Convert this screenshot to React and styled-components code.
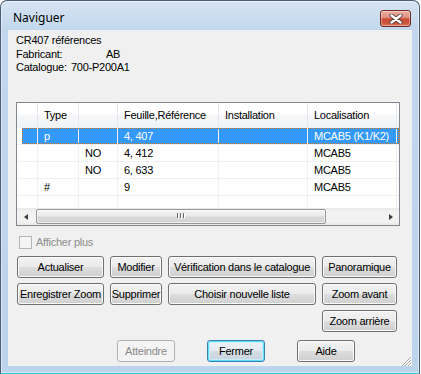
import React from 'react';
import styled, { createGlobalStyle, css } from 'styled-components';

const GlobalStyle = createGlobalStyle`
  html, body {
    margin: 0;
    padding: 0;
    background: #ffffff;
  }
  body {
    font-family: "Liberation Sans", Arial, sans-serif;
    font-size: 11px;
    letter-spacing: -0.25px;
    color: #000000;
  }
  * {
    box-sizing: border-box;
  }
`;

const Window = styled.div`
  width: 420px;
  height: 374px;
  display: flex;
  flex-direction: column;
  padding: 0 7px 7px;
  border: 1px solid #4b5d74;
  border-bottom-color: #35c2d6;
  border-radius: 7px 7px 0 0;
  background: linear-gradient(180deg, #d6e4f3 0px, #c2d7ed 29px, #bcd3ec 100%);
  box-shadow: inset 0 0 0 1px rgba(255, 255, 255, 0.45);
`;

const TitleBar = styled.div`
  height: 29px;
  flex: none;
  display: flex;
  align-items: flex-start;
  justify-content: space-between;
  padding-top: 9px;
`;

const Title = styled.span`
  margin-left: 5px;
  font-family: "Noto Sans", "Open Sans", sans-serif;
  font-size: 12px;
  letter-spacing: 0;
  line-height: 16px;
  color: #000000;
`;

const CloseButton = styled.div`
  width: 31px;
  height: 17px;
  margin-right: 1px;
  border: 1px solid #6e2a23;
  border-radius: 3px;
  background: linear-gradient(180deg, #eab0a2 0%, #de8f7e 45%, #c84b33 52%, #c9553b 80%, #d8795c 100%);
  box-shadow: inset 0 0 0 1px rgba(255, 255, 255, 0.35);
  display: flex;
  align-items: center;
  justify-content: center;
`;

const Client = styled.div`
  flex: 1;
  position: relative;
  background: #f0f0f0;
  padding: 4px 8px 4px;
  display: flex;
  flex-direction: column;
`;

const Info = styled.div`
  line-height: 13px;
`;

const InfoTitle = styled.div`
  margin-bottom: 1px;
`;

const FieldRow = styled.div`
  display: flex;
`;

const FieldLabel = styled.span`
  width: ${(p) => p.$w}px;
  flex: none;
`;

const ListView = styled.div`
  margin-top: 28px;
  width: 384px;
  height: 124px;
  border: 1px solid #828790;
  background: #ffffff;
  display: flex;
  flex-direction: column;
  overflow: hidden;
`;

const HeaderRow = styled.div`
  display: flex;
  height: 25px;
  flex: none;
  border-bottom: 1px solid #f0f0f0;
  background: linear-gradient(180deg, #ffffff 0%, #ffffff 45%, #f6f7f9 55%, #f1f2f4 100%);
`;

const HeaderCell = styled.div`
  width: ${(p) => p.$w}px;
  flex: none;
  padding-left: 6px;
  display: flex;
  align-items: center;
  border-right: 1px solid #e5e8ec;
  white-space: nowrap;
  overflow: hidden;
`;

const Body = styled.div`
  flex: 1;
  overflow: hidden;
`;

const Row = styled.div`
  display: flex;
  height: 17px;
  position: relative;
  border-bottom: 1px solid #f0f0f0;
  ${(p) =>
    p.$selected &&
    css`
      background: linear-gradient(90deg, transparent 5px, #3399ff 5px);
      color: #ffffff;
      &::after {
        content: '';
        position: absolute;
        left: 5px;
        right: 0;
        top: 0;
        bottom: 0;
        border: 1px dotted #cc7a33;
        pointer-events: none;
      }
    `}
`;

const Cell = styled.div`
  width: ${(p) => p.$w}px;
  flex: none;
  padding-left: 6px;
  line-height: 16px;
  border-right: 1px solid #f0f0f0;
  white-space: nowrap;
  overflow: hidden;
`;

const HScroll = styled.div`
  height: 17px;
  flex: none;
  display: flex;
  align-items: center;
  background: linear-gradient(180deg, #e8e8e8 0%, #f2f2f2 20%, #f2f2f2 80%, #e8e8e8 100%);
`;

const ScrollArrow = styled.div`
  width: 17px;
  height: 17px;
  flex: none;
  display: flex;
  align-items: center;
  justify-content: center;
  &::before {
    content: '';
    width: 0;
    height: 0;
    border-top: 3.5px solid transparent;
    border-bottom: 3.5px solid transparent;
    ${(p) =>
      p.$dir === 'left'
        ? css`border-right: 4px solid #3c3c3c;`
        : css`border-left: 4px solid #3c3c3c;`}
  }
`;

const Thumb = styled.div`
  width: 290px;
  height: 15px;
  margin-left: 2px;
  border: 1px solid #979797;
  border-radius: 2px;
  background: linear-gradient(180deg, #f4f4f4 0%, #e9e9e9 48%, #d8d8d8 52%, #d3d3d3 100%);
  box-shadow: inset 0 0 0 1px rgba(255, 255, 255, 0.6);
  display: flex;
  align-items: center;
  justify-content: center;
`;

const ScrollTrack = styled.div`
  flex: 1;
`;

const CheckRow = styled.label`
  margin-top: 10px;
  margin-left: 3px;
  display: flex;
  align-items: center;
  gap: 4px;
  line-height: 13px;
  color: #8d8d8d;
`;

const CheckBox = styled.span`
  width: 13px;
  height: 13px;
  border: 1px solid #b5b5b5;
  background: #f4f4f4;
`;

const ButtonGrid = styled.div`
  margin-top: 7px;
  margin-left: 1px;
  display: grid;
  grid-template-columns: 87px 52px 148px 75px;
  grid-auto-rows: 22px;
  column-gap: 6px;
  row-gap: 5px;
`;

const Button = styled.button`
  font-family: "Liberation Sans", Arial, sans-serif;
  font-size: 11px;
  letter-spacing: -0.25px;
  color: #000000;
  padding: 0;
  height: 22px;
  width: ${(p) => (p.$w ? `${p.$w}px` : 'auto')};
  grid-column: ${(p) => p.$col || 'auto'};
  border: 1px solid #707070;
  border-radius: 3px;
  background: linear-gradient(180deg, #f2f2f2 0%, #ebebeb 48%, #dddddd 52%, #cfcfcf 100%);
  box-shadow: inset 0 0 0 1px #fbfbfb;
  white-space: nowrap;
  ${(p) =>
    p.$default &&
    css`
      border-color: #3c7fb1;
      background: linear-gradient(180deg, #eef3f7 0%, #e2e9ef 48%, #d3dce4 52%, #cbd5de 100%);
      box-shadow: inset 0 0 0 1px #5ee0fb, inset 0 0 0 2px #c9eefb;
    `}
  &:disabled {
    color: #8a8a8a;
    border-color: #adb2b5;
    background: #f4f4f4;
    box-shadow: none;
  }
`;

const BottomRow = styled.div`
  margin-top: 8px;
  margin-left: 101px;
  display: flex;
  gap: 32px;
`;

const SizeGrip = styled.svg`
  position: absolute;
  right: 0;
  bottom: 0;
`;

const CloseGlyph = () => (
  <svg width="14" height="10" viewBox="0 0 14 10">
    <path d="M2.5 1.5 L11.5 8.5 M11.5 1.5 L2.5 8.5" stroke="#5b3a36" strokeWidth="4.2" strokeLinecap="round" />
    <path d="M2.5 1.5 L11.5 8.5 M11.5 1.5 L2.5 8.5" stroke="#ffffff" strokeWidth="2.4" strokeLinecap="round" />
  </svg>
);

const GripLines = () => (
  <svg width="9" height="7" viewBox="0 0 9 7">
    {[0, 3, 6].map((x) => (
      <g key={x}>
        <rect x={x + 1} y="1" width="1" height="5" fill="#ffffff" />
        <rect x={x} y="0" width="1" height="5" fill="#6a6a6a" />
      </g>
    ))}
  </svg>
);

const columns = [21, 41, 39, 101, 89, 89];
const headers = ['', 'Type', '', 'Feuille,Référence', 'Installation', 'Localisation'];
const rows = [
  { cells: ['', 'p', '', '4, 407', '', 'MCAB5 (K1/K2)'], selected: true },
  { cells: ['', '', 'NO', '4, 412', '', 'MCAB5'] },
  { cells: ['', '', 'NO', '6, 633', '', 'MCAB5'] },
  { cells: ['', '#', '', '9', '', 'MCAB5'] },
  { cells: ['', '', '', '', '', ''] },
];

const App = () => {
  return (
    <>
      <GlobalStyle />
      <Window>
        <TitleBar>
          <Title>Naviguer</Title>
          <CloseButton>
            <CloseGlyph />
          </CloseButton>
        </TitleBar>
        <Client>
          <Info>
            <InfoTitle>CR407 références</InfoTitle>
            <FieldRow>
              <FieldLabel $w={90}>Fabricant:</FieldLabel>
              <span>AB</span>
            </FieldRow>
            <FieldRow>
              <FieldLabel $w={55}>Catalogue:</FieldLabel>
              <span>700-P200A1</span>
            </FieldRow>
          </Info>

          <ListView>
            <HeaderRow>
              {headers.map((h, i) => (
                <HeaderCell key={`h-${i}`} $w={columns[i]}>
                  {h}
                </HeaderCell>
              ))}
            </HeaderRow>
            <Body>
              {rows.map((row, r) => (
                <Row key={`r-${r}`} $selected={row.selected}>
                  {row.cells.map((c, i) => (
                    <Cell key={`c-${r}-${i}`} $w={columns[i]}>
                      {c}
                    </Cell>
                  ))}
                </Row>
              ))}
            </Body>
            <HScroll>
              <ScrollArrow $dir="left" />
              <Thumb>
                <GripLines />
              </Thumb>
              <ScrollTrack />
              <ScrollArrow $dir="right" />
            </HScroll>
          </ListView>

          <CheckRow>
            <CheckBox />
            Afficher plus
          </CheckRow>

          <ButtonGrid>
            <Button>Actualiser</Button>
            <Button>Modifier</Button>
            <Button>Vérification dans le catalogue</Button>
            <Button>Panoramique</Button>
            <Button>Enregistrer Zoom</Button>
            <Button>Supprimer</Button>
            <Button>Choisir nouvelle liste</Button>
            <Button>Zoom avant</Button>
            <Button $col={4}>Zoom arrière</Button>
          </ButtonGrid>

          <BottomRow>
            <Button $w={58} disabled>
              Atteindre
            </Button>
            <Button $w={58} $default>
              Fermer
            </Button>
            <Button $w={58}>Aide</Button>
          </BottomRow>

          <SizeGrip width="12" height="12" viewBox="0 0 12 12">
            {[3, 6, 9].map((o) => (
              <g key={o}>
                <line x1={12} y1={o} x2={o} y2={12} stroke="#ffffff" strokeWidth="1" />
                <line x1={11} y1={o} x2={o - 1} y2={12} stroke="#a8a8a8" strokeWidth="1" />
              </g>
            ))}
          </SizeGrip>
        </Client>
      </Window>
    </>
  );
};

export default App;
